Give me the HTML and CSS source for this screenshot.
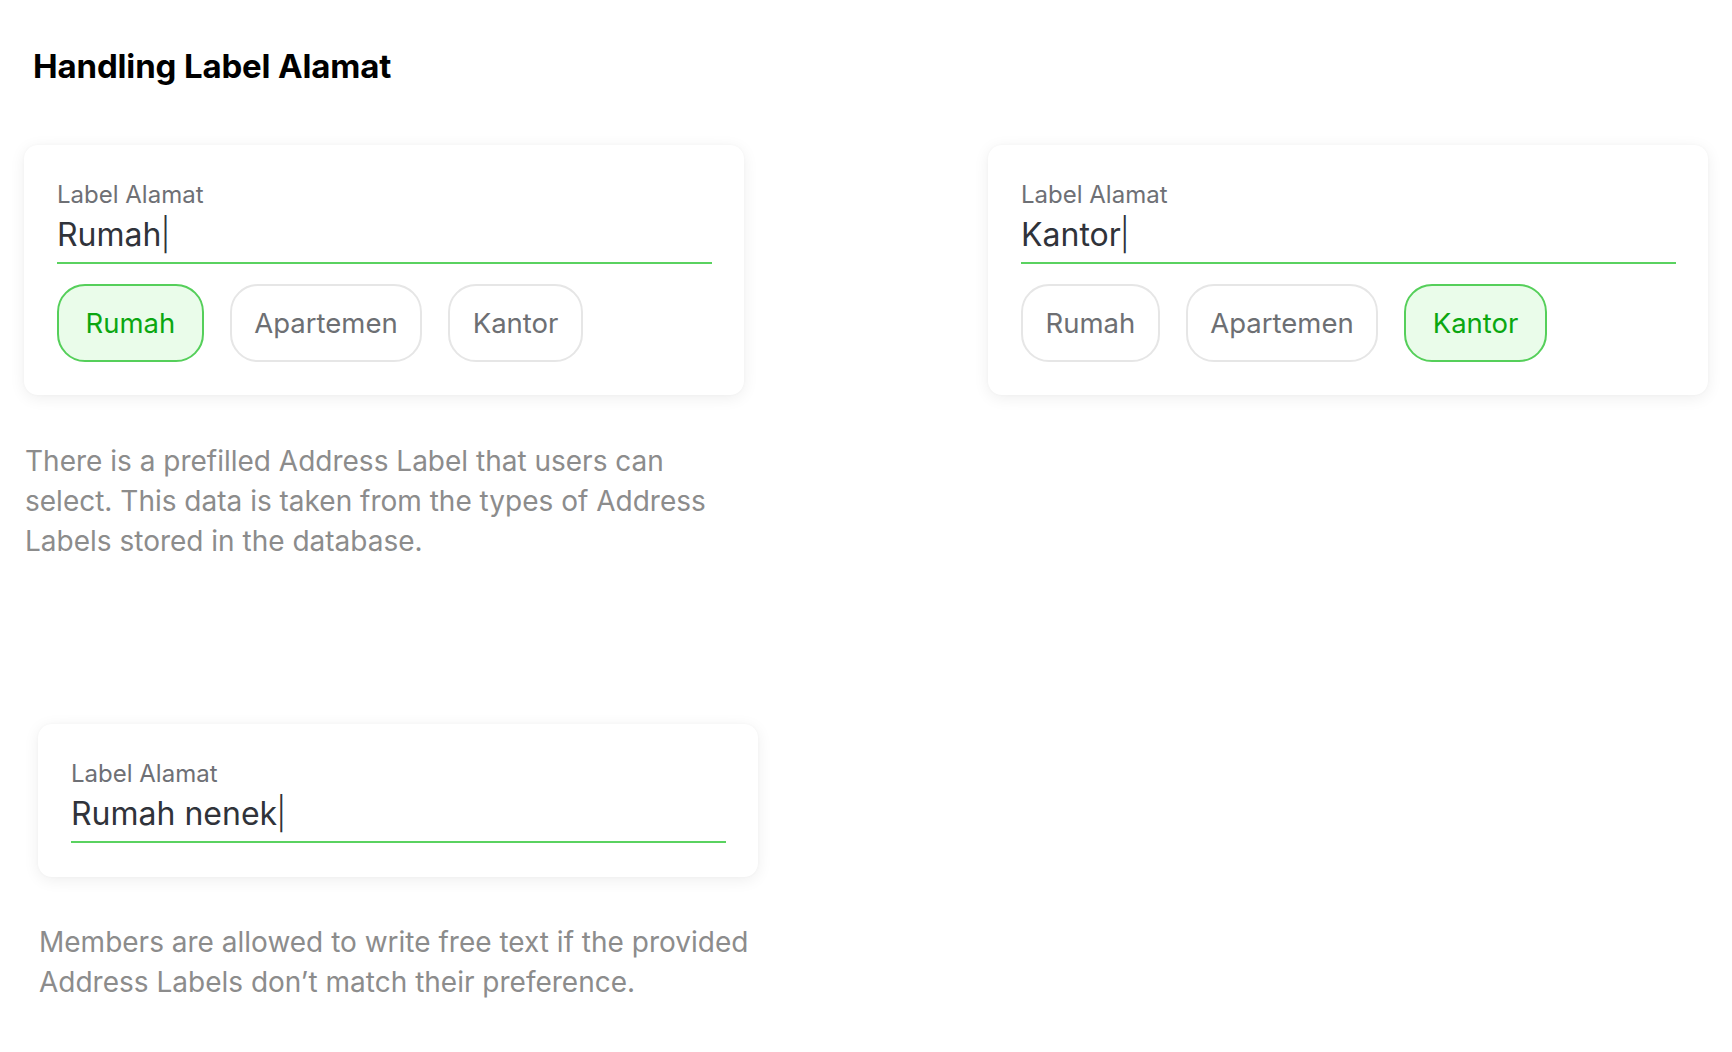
FILE: index.html
```html
<!DOCTYPE html>
<html lang="id">
<head>
<meta charset="utf-8">
<title>Handling Label Alamat</title>
<link rel="stylesheet" href="styles.css">
</head>
<body>
<main class="page">
  <h1 class="title">Handling Label Alamat</h1>
  <section class="row">
    <div class="col">
      <div class="card">
        <div class="field">
          <div class="field-label">Label Alamat</div>
          <div class="field-input">Rumah<span class="caret">|</span></div>
        </div>
        <div class="chips">
          <span class="chip chip-active">Rumah</span>
          <span class="chip">Apartemen</span>
          <span class="chip">Kantor</span>
        </div>
      </div>
      <p class="desc">There is a prefilled Address Label that users can select. This data is taken from the types of Address Labels stored in the database.</p>
    </div>
    <div class="col">
      <div class="card">
        <div class="field">
          <div class="field-label">Label Alamat</div>
          <div class="field-input">Kantor<span class="caret">|</span></div>
        </div>
        <div class="chips">
          <span class="chip">Rumah</span>
          <span class="chip">Apartemen</span>
          <span class="chip chip-active">Kantor</span>
        </div>
      </div>
    </div>
  </section>
  <section class="row row-second">
    <div class="col">
      <div class="card card-plain">
        <div class="field">
          <div class="field-label">Label Alamat</div>
          <div class="field-input">Rumah nenek<span class="caret">|</span></div>
        </div>
      </div>
      <p class="desc">Members are allowed to write free text if the provided Address Labels don’t match their preference.</p>
    </div>
  </section>
</main>
</body>
</html>
```
FILE: styles.css
```css
* { box-sizing: border-box; }
html, body { margin: 0; padding: 0; background: #ffffff; }
body { font-family: Inter, "Noto Sans", sans-serif; color: #2e3137; }

.page { padding: 46px 24px 40px 24px; }

.title {
  margin: 0 0 0 9px;
  font-size: 33px;
  line-height: 40px;
  font-weight: 700;
  color: #000000;
  letter-spacing: -0.15px;
}

.row {
  display: flex;
  justify-content: space-between;
  margin-top: 59px;
}
.row-second { margin-top: 163px; padding-left: 14px; }

.col { width: 720px; }

.card {
  width: 720px;
  background: #ffffff;
  border-radius: 14px;
  box-shadow: 0 3px 16px rgba(0, 0, 0, 0.07), 0 0 3px rgba(0, 0, 0, 0.03);
  padding: 36px 32px 33px 33px;
}
.card-plain { padding-bottom: 34px; }

.field-label {
  font-size: 24px;
  line-height: 28px;
  color: #6e7075;
}
.field-input {
  margin-top: 7px;
  font-size: 32px;
  line-height: 38px;
  color: #30333a;
  padding-bottom: 8px;
  border-bottom: 2px solid #5ad260;
}
.caret { font-weight: 300; margin-left: -1px; }

.chips {
  display: flex;
  gap: 26px;
  margin-top: 20px;
}
.chip {
  display: flex;
  align-items: center;
  height: 78px;
  padding: 0 22.5px;
  border: 2px solid #e6e6e6;
  border-radius: 28px;
  font-size: 27.5px;
  color: #6d6f73;
}
.chip-active {
  padding: 0 26.5px;
  background: #eafcea;
  border-color: #55cf5a;
  color: #0ba711;
}

.desc {
  margin: 46px 0 0 1px;
  font-size: 28px;
  line-height: 40px;
  color: #8c8c8c;
}
.row-second .desc { margin-top: 45px; }
```
